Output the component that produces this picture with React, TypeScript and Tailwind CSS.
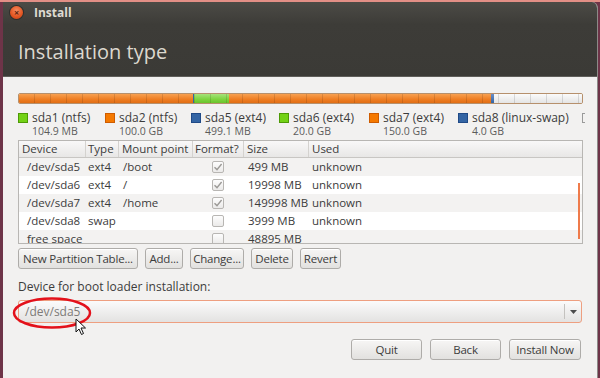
import React from 'react';

const segments = [
  { w: 175, color: 'bg-[linear-gradient(#f7a050,#ee7d22_60%,#e06e14)]' },
  { w: 1, color: 'bg-[#3465a4]' },
  { w: 35, color: 'bg-[linear-gradient(#a6e27a,#7dd33e_60%,#6ac32c)]' },
  { w: 263, color: 'bg-[linear-gradient(#f7a050,#ee7d22_60%,#e06e14)]' },
  { w: 4, color: 'bg-[linear-gradient(#6a8fc8,#3465a4)]' },
  { w: 88, color: 'bg-[linear-gradient(#fbfbfb,#e4e4e4)]' },
];

const legend = [
  { name: 'sda1 (ntfs)', size: '104.9 MB', box: 'bg-[#73d216] border-[#4e9a06]', w: 'w-[87px]' },
  { name: 'sda2 (ntfs)', size: '100.0 GB', box: 'bg-[#f57900] border-[#ce5c00]', w: 'w-[86px]' },
  { name: 'sda5 (ext4)', size: '499.1 MB', box: 'bg-[#3465a4] border-[#204a87]', w: 'w-[88px]' },
  { name: 'sda6 (ext4)', size: '20.0 GB', box: 'bg-[#73d216] border-[#4e9a06]', w: 'w-[90px]' },
  { name: 'sda7 (ext4)', size: '150.0 GB', box: 'bg-[#f57900] border-[#ce5c00]', w: 'w-[89px]' },
  { name: 'sda8 (linux-swap)', size: '4.0 GB', box: 'bg-[#3465a4] border-[#204a87]', w: 'w-[124px]' },
];

const rows = [
  { dev: '/dev/sda5', type: 'ext4', mount: '/boot', fmt: true, size: '499 MB', used: 'unknown' },
  { dev: '/dev/sda6', type: 'ext4', mount: '/', fmt: true, size: '19998 MB', used: 'unknown' },
  { dev: '/dev/sda7', type: 'ext4', mount: '/home', fmt: true, size: '149998 MB', used: 'unknown' },
  { dev: '/dev/sda8', type: 'swap', mount: '', fmt: false, size: '3999 MB', used: 'unknown' },
  { dev: 'free space', type: '', mount: '', fmt: false, size: '48895 MB', used: '' },
];

const Btn = ({ label, w }: { label: string; w: string }) => (
  <div
    className={`${w} flex h-[21px] items-center justify-center whitespace-nowrap rounded-[3px] border border-[#aeaca9] bg-[linear-gradient(#f7f6f5,#e2e1df)] text-[11.5px] tracking-[-0.2px] text-[#3c3c3c] shadow-[inset_0_1px_0_#fff]`}
  >
    {label}
  </div>
);

const Check = ({ on }: { on: boolean }) => (
  <div className="flex h-[12px] w-[12px] items-center justify-center rounded-[2px] border border-[#b8b6b3] bg-[linear-gradient(#fdfdfd,#ebeae9)]">
    {on && (
      <svg width="10" height="10" viewBox="0 0 10 10">
        <path d="M1.5 5.2 L4 7.6 L8.6 2" fill="none" stroke="#9c9a97" strokeWidth="1.4" />
      </svg>
    )}
  </div>
);

export default function App() {
  return (
    <div className="h-[378px] w-[600px] overflow-hidden border-t-2 border-[#e28f86] bg-[#6e3448] pl-[3px] font-['Open_Sans',sans-serif]">
      <div className="relative flex h-[376px] w-[595px] flex-col overflow-hidden rounded-tr-[6px] border-r border-[#8d8b88] bg-[#f2f1f0]">
        {/* title bar */}
        <div className="h-[75px] shrink-0 border-b border-[#5f5e5a] bg-[linear-gradient(#4c4b46,#3d3c38_30%,#3b3a36)]">
          <div className="flex h-[21px] items-center pl-[7px]">
            <div className="flex h-[13px] w-[13px] items-center justify-center rounded-full bg-[radial-gradient(circle_at_50%_35%,#f48a5f,#e25420_60%,#b7401a)] shadow-[0_0_0_1px_#2f2e2b]">
              <span className="text-[9px] leading-none font-bold text-[#5a2510]">×</span>
            </div>
            <span className="ml-[11px] text-[12px] font-bold text-[#dfdbd2]">Install</span>
          </div>
          <div className="mt-[15px] pl-[15px] text-[20px] leading-[28px] text-[#dcd8cf]">Installation type</div>
        </div>

        <div className="flex flex-1 flex-col px-[15px] pt-[16px]">
          {/* partition bar */}
          <div className="relative flex h-[11px] w-[565px] overflow-hidden rounded-[2px] border border-[#b6906c]">
            {segments.map((s, i) => (
              <div key={i} className={`h-full ${s.color}`} style={{ width: s.w }} />
            ))}
            <div className="absolute inset-0 bg-[repeating-linear-gradient(90deg,transparent_0px,transparent_15px,rgba(0,0,0,0.12)_15px,rgba(0,0,0,0.12)_16px)]" />
          </div>

          {/* legend */}
          <div className="mt-[6px] flex h-[28px]">
            {legend.map((l) => (
              <div key={l.name} className={`${l.w} shrink-0 flex`}>
                <div className={`mt-[3px] h-[10px] w-[10px] border ${l.box}`} />
                <div className="ml-[4px] flex flex-col">
                  <span className="text-[12px] leading-[15px] text-[#3c3c3c]">{l.name}</span>
                  <span className="text-[10.5px] leading-[12px] text-[#5c5c5c]">{l.size}</span>
                </div>
              </div>
            ))}
            <div className="mt-[3px] h-[10px] w-[3px] shrink-0 border-y border-l border-[#9a9a9a]" />
          </div>

          {/* table */}
          <div className="relative mt-[2px] h-[104px] w-[565px] overflow-hidden border border-[#b8b6b3] bg-white text-[11.5px] text-[#3c3c3c]">
            <div className="flex h-[17px] items-center border-b border-[#c8c6c3] bg-[linear-gradient(#f9f8f8,#e8e7e6)]">
              <div className="w-[67px] border-r border-[#d4d2cf] pl-[3px] leading-[16px]">Device</div>
              <div className="w-[33px] border-r border-[#d4d2cf] pl-[2px] leading-[16px]">Type</div>
              <div className="w-[74px] border-r border-[#d4d2cf] pl-[3px] leading-[16px] whitespace-nowrap">Mount point</div>
              <div className="w-[51px] border-r border-[#d4d2cf] pl-[2px] leading-[16px]">Format?</div>
              <div className="w-[65px] border-r border-[#d4d2cf] pl-[3px] leading-[16px]">Size</div>
              <div className="flex-1 pl-[3px] leading-[16px]">Used</div>
            </div>
            <div>
              {rows.map((r, i) => (
                <div
                  key={r.dev}
                  className={`flex h-[18px] items-center ${i % 2 === 0 ? 'bg-[#f3f2f1]' : 'bg-white'}`}
                >
                  <div className="w-[67px] pl-[8px]">{r.dev}</div>
                  <div className="w-[33px] pl-[2px]">{r.type}</div>
                  <div className="w-[74px] pl-[4px]">{r.mount}</div>
                  <div className="flex w-[51px] justify-center pr-[2px]">
                    <Check on={r.fmt} />
                  </div>
                  <div className="w-[65px] pl-[4px] whitespace-nowrap">{r.size}</div>
                  <div className="flex-1 pl-[3px]">{r.used}</div>
                </div>
              ))}
            </div>
            <div className="absolute top-[42px] right-[2px] h-[56px] w-[2px] bg-[#ef7b4b]" />
          </div>

          {/* buttons */}
          <div className="mt-[4px] flex gap-[7px]">
            <Btn label="New Partition Table..." w="w-[120px]" />
            <Btn label="Add..." w="w-[38px]" />
            <Btn label="Change..." w="w-[54px]" />
            <Btn label="Delete" w="w-[42px]" />
            <Btn label="Revert" w="w-[41px]" />
          </div>

          <div className="mt-[10px] text-[12px] leading-[16px] text-[#3c3c3c]">Device for boot loader installation:</div>

          {/* combo */}
          <div className="mt-[5px] flex h-[23px] w-[564px] items-center rounded-[3px] border border-[#ee9f80] bg-[linear-gradient(#fbfbfb,#e3e2e1)]">
            <span className="flex-1 pl-[6px] text-[12px] text-[#7d7b78]">/dev/sda5</span>
            <div className="h-[15px] w-px bg-[#c4c2bf]" />
            <div className="flex w-[16px] justify-center">
              <svg width="7" height="4" viewBox="0 0 7 4">
                <path d="M0 0 H7 L3.5 4 Z" fill="#4c4c4c" />
              </svg>
            </div>
          </div>

          {/* bottom buttons */}
          <div className="mt-[16px] flex justify-end gap-[8px] pr-[1px]">
            <Btn label="Quit" w="w-[71px]" />
            <Btn label="Back" w="w-[71px]" />
            <Btn label="Install Now" w="w-[72px]" />
          </div>
        </div>

        {/* red annotation and cursor */}
        <svg className="absolute top-[293px] left-[9px]" width="82" height="36" viewBox="0 0 82 36">
          <ellipse cx="40" cy="18" rx="38" ry="14.5" fill="none" stroke="#e3111b" strokeWidth="2.5" />
        </svg>
        <svg className="absolute top-[316px] left-[72px]" width="12" height="18" viewBox="0 0 12 18">
          <path d="M1 1 L1 14 L4 11 L6.5 16.5 L8.5 15.5 L6 10 L10.5 10 Z" fill="#fff" stroke="#111" strokeWidth="1" strokeLinejoin="round" />
        </svg>
      </div>
    </div>
  );
}
